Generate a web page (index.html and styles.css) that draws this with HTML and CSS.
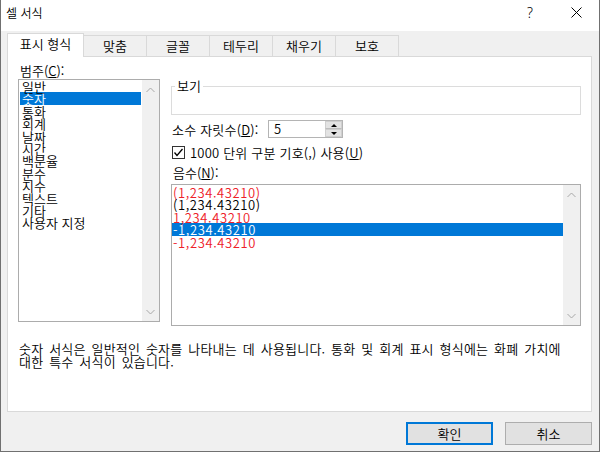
FILE: index.html
```html
<!DOCTYPE html>
<html lang="ko">
<head>
    <meta charset="UTF-8">
    <title>셀 서식</title>
    <link rel="stylesheet" href="styles.css">
</head>
<body>
    <div class="dialog">
        <div class="titlebar">
            <span class="title">셀 서식</span>
            <span class="title-btn help">?</span>
            <span class="title-btn close">
                <svg width="11" height="11" viewBox="0 0 11 11"><path d="M0.5 0.5L10.5 10.5M10.5 0.5L0.5 10.5" stroke="#000" stroke-width="1" fill="none"/></svg>
            </span>
        </div>

        <div class="content">
            <div class="tabs">
                <div class="tab active">표시 형식</div>
                <div class="tab">맞춤</div>
                <div class="tab">글꼴</div>
                <div class="tab">테두리</div>
                <div class="tab">채우기</div>
                <div class="tab">보호</div>
            </div>

            <div class="panel">
                <div class="panel-main">
                    <div class="category">
                        <div class="label">범주(<u>C</u>):</div>
                        <div class="listbox category-list">
                            <ul class="items">
                                <li>일반</li>
                                <li class="selected">숫자</li>
                                <li>통화</li>
                                <li>회계</li>
                                <li>날짜</li>
                                <li>시간</li>
                                <li>백분율</li>
                                <li>분수</li>
                                <li>지수</li>
                                <li>텍스트</li>
                                <li>기타</li>
                                <li>사용자 지정</li>
                            </ul>
                            <div class="scrollbar">
                                <svg width="9" height="6" viewBox="0 0 9 6"><polyline points="0.5,5 4.5,1 8.5,5" fill="none" stroke="#a8a8a8"/></svg>
                                <svg width="9" height="6" viewBox="0 0 9 6"><polyline points="0.5,1 4.5,5 8.5,1" fill="none" stroke="#a8a8a8"/></svg>
                            </div>
                        </div>
                    </div>

                    <div class="details">
                        <fieldset class="preview">
                            <legend>보기</legend>
                            <div class="preview-sample"></div>
                        </fieldset>

                        <div class="decimals">
                            <span class="decimals-label">소수 자릿수(<u>D</u>):</span>
                            <div class="spin">
                                <span class="spin-value">5</span>
                                <div class="spin-buttons">
                                    <span class="spin-up"></span>
                                    <span class="spin-down"></span>
                                </div>
                            </div>
                        </div>

                        <div class="check-row">
                            <span class="checkbox">
                                <svg width="11" height="11" viewBox="0 0 11 11"><polyline points="1.5,5.5 4,8.5 9.5,2" fill="none" stroke="#000" stroke-width="1.3"/></svg>
                            </span>
                            1000 단위 구분 기호(,) 사용(<u>U</u>)
                        </div>

                        <div class="label negative-label">음수(<u>N</u>):</div>
                        <div class="listbox negative-list">
                            <ul class="items">
                                <li class="red">(1,234.43210)</li>
                                <li>(1,234.43210)</li>
                                <li class="red">1,234.43210</li>
                                <li class="selected">-1,234.43210</li>
                                <li class="red">-1,234.43210</li>
                            </ul>
                            <div class="scrollbar">
                                <svg width="9" height="6" viewBox="0 0 9 6"><polyline points="0.5,5 4.5,1 8.5,5" fill="none" stroke="#a8a8a8"/></svg>
                                <svg width="9" height="6" viewBox="0 0 9 6"><polyline points="0.5,1 4.5,5 8.5,1" fill="none" stroke="#a8a8a8"/></svg>
                            </div>
                        </div>
                    </div>
                </div>

                <p class="description">숫자 서식은 일반적인 숫자를 나타내는 데 사용됩니다. 통화 및 회계 표시 형식에는 화폐 가치에<br>대한 특수 서식이 있습니다.</p>
            </div>
        </div>

        <div class="footer">
            <button class="btn default">확인</button>
            <button class="btn">취소</button>
        </div>
    </div>
</body>
</html>
```

FILE: styles.css
```css
* {
    box-sizing: border-box;
}
body {
    margin: 0;
    font-family: "Noto Sans CJK KR", sans-serif;
    font-size: 13px;
    font-weight: 350;
    color: #000;
    background: #f0f0f0;
}
.dialog {
    width: 600px;
    height: 452px;
    display: flex;
    flex-direction: column;
    background: #f0f0f0;
    border-left: 1px solid #707070;
    border-right: 1px solid #707070;
    border-bottom: 1px solid #707070;
}
.titlebar {
    height: 31px;
    flex: none;
    display: flex;
    align-items: center;
    background: #fff;
    padding-left: 5px;
}
.title {
    font-size: 12px;
    line-height: 16px;
    margin-top: -6px;
}
.title-btn {
    width: 46px;
    height: 31px;
    display: flex;
    align-items: center;
    justify-content: center;
    padding-bottom: 6px;
}
.help {
    margin-left: auto;
    font-family: "Noto Sans", sans-serif;
    font-size: 14px;
}
.content {
    padding: 2px 7px 0 6px;
}
.tabs {
    display: flex;
    align-items: flex-end;
    height: 23px;
}
.tab {
    width: 64px;
    height: 21px;
    margin-left: -1px;
    border: 1px solid #d9d9d9;
    border-bottom: none;
    text-align: center;
    line-height: 19px;
    background: #f0f0f0;
}
.tab.active {
    width: 77px;
    height: 24px;
    margin-left: 0;
    margin-bottom: -1px;
    line-height: 20px;
    background: #fff;
    position: relative;
    z-index: 1;
}
.panel {
    height: 356px;
    border: 1px solid #d9d9d9;
    background: #fff;
    padding: 6px 9px 0 10px;
}
.panel-main {
    display: flex;
}
.label {
    line-height: 16px;
    padding-left: 2px;
}
.category {
    width: 142px;
}
.listbox {
    display: flex;
    border: 1px solid #acacac;
    background: #fff;
}
.category-list {
    height: 243px;
}
.items {
    list-style: none;
    margin: 0;
    padding: 0;
    flex: 1;
}
.items li {
    height: 12.4px;
    line-height: 13.4px;
    margin: 0 1px;
    padding-left: 2px;
    white-space: nowrap;
}
.items li.selected {
    background: #0078d7;
    color: #fff;
}
.items li.red {
    color: #ee2028;
}
.scrollbar {
    width: 17px;
    background: #f0f0f0;
    display: flex;
    flex-direction: column;
    justify-content: space-between;
    align-items: center;
    padding: 7px 0 6px;
}
.details {
    width: 410px;
    margin-left: 11px;
}
.preview {
    margin: 15px 0 0;
    padding: 0;
    border: 1px solid #dcdcdc;
}
.preview legend {
    margin-left: 3px;
    padding: 0 2px;
    line-height: 16px;
}
.preview-sample {
    height: 20px;
}
.decimals {
    display: flex;
    align-items: center;
    margin-top: 5px;
    height: 18px;
}
.decimals-label {
    width: 97px;
    padding-left: 1px;
    letter-spacing: 0.2px;
}
.spin {
    width: 75px;
    height: 18px;
    border: 1px solid #b4b4b4;
    display: flex;
}
.spin-value {
    flex: 1;
    padding-left: 5px;
    line-height: 15px;
}
.spin-buttons {
    width: 17px;
    display: flex;
    flex-direction: column;
}
.spin-up,
.spin-down {
    flex: 1;
    background: #e3e3e3;
    border: 1px solid #cfcfcf;
    display: flex;
    align-items: center;
    justify-content: center;
}
.spin-up {
    border-bottom-color: #bdbdbd;
}
.spin-up::after {
    content: "";
    border-left: 3px solid transparent;
    border-right: 3px solid transparent;
    border-bottom: 3px solid #000;
}
.spin-down::after {
    content: "";
    border-left: 3px solid transparent;
    border-right: 3px solid transparent;
    border-top: 3px solid #000;
}
.check-row {
    display: flex;
    align-items: center;
    margin-top: 7px;
    height: 15px;
    padding-left: 1px;
    letter-spacing: 0.2px;
}
.checkbox {
    width: 13px;
    height: 13px;
    border: 1px solid #333;
    margin-right: 5px;
    display: flex;
    align-items: center;
    justify-content: center;
}
.negative-label {
    margin-top: 5px;
}
.negative-list {
    margin-top: 3px;
    height: 142px;
}
.negative-list .items {
    padding-top: 1px;
}
.negative-list .items li {
    margin: 0;
    padding-left: 1px;
    letter-spacing: 0.6px;
}
.description {
    margin: 16px 0 0;
    padding-left: 1px;
    line-height: 13px;
    word-spacing: 2px;
    letter-spacing: 0.2px;
    white-space: nowrap;
}
.footer {
    flex: 1;
    display: flex;
    justify-content: flex-end;
    align-items: flex-start;
    gap: 12px;
    padding: 10px 7px 0 0;
}
.btn {
    width: 87px;
    height: 23px;
    font-family: inherit;
    font-size: 13px;
    font-weight: inherit;
    line-height: 16px;
    padding: 0;
    background: #e1e1e1;
    border: 1px solid #adadad;
    color: #000;
}
.btn.default {
    border: 2px solid #0078d7;
}
```
